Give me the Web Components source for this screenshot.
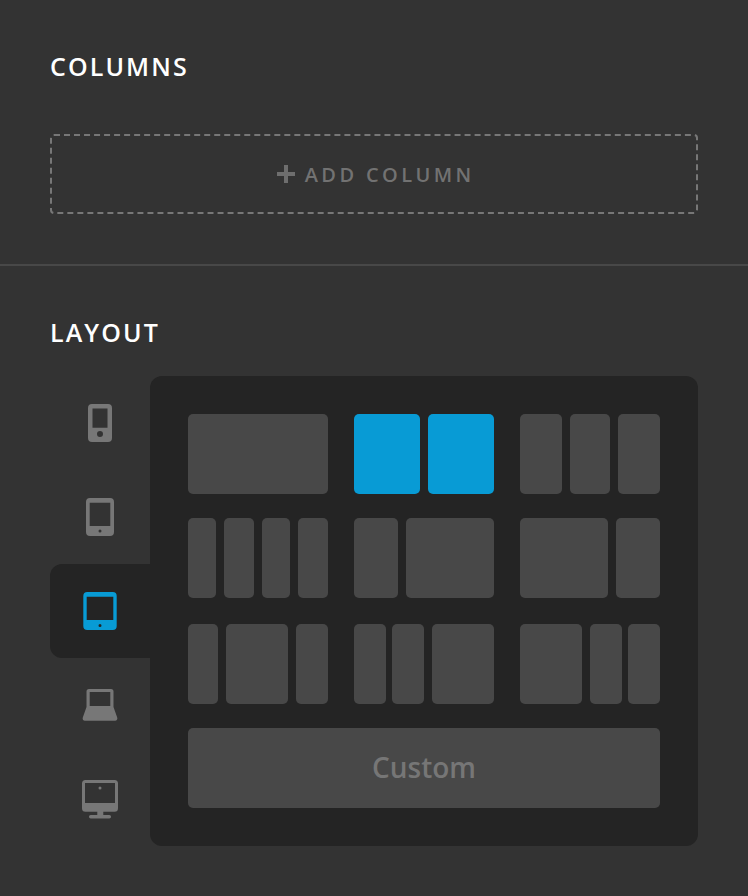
<!DOCTYPE html>
<html>
<head>
<meta charset="utf-8">
<title>Columns</title>
<style>
  html, body { margin: 0; background: #333; }
  body { font-family: "Open Sans", "Liberation Sans", sans-serif; width: 748px; height: 896px; overflow: hidden; }
</style>
</head>
<body>
<panel-section title="COLUMNS" style="height:264px">
  <add-column></add-column>
</panel-section>
<panel-section title="LAYOUT" divided>
  <layout-picker>
    <device-tab slot="tabs" device="phone"></device-tab>
    <device-tab slot="tabs" device="tablet"></device-tab>
    <device-tab slot="tabs" device="tablet-wide" active></device-tab>
    <device-tab slot="tabs" device="laptop"></device-tab>
    <device-tab slot="tabs" device="desktop"></device-tab>

    <layout-row>
      <layout-option cols="140"></layout-option>
      <layout-option cols="66 66" active></layout-option>
      <layout-option cols="42 40 42"></layout-option>
    </layout-row>
    <layout-row>
      <layout-option cols="28 30 28 30"></layout-option>
      <layout-option cols="44 88"></layout-option>
      <layout-option cols="88 44"></layout-option>
    </layout-row>
    <layout-row style="margin-top:2px">
      <layout-option cols="30 62 32"></layout-option>
      <layout-option cols="32 32 62" gaps="6 8"></layout-option>
      <layout-option cols="62 32 32" gaps="8 6"></layout-option>
    </layout-row>
    <custom-option>Custom</custom-option>
  </layout-picker>
</panel-section>

<script>
class PanelSection extends HTMLElement {
  connectedCallback() {
    this.attachShadow({ mode: "open" });
    this.shadowRoot.innerHTML = `
      <style>
        :host {
          display: block;
          box-sizing: border-box;
          padding: 0 50px;
        }
        :host([divided]) {
          border-top: 2px solid #484848;
        }
        h2 {
          margin: 0;
          color: #fff;
          font-size: 25px;
          line-height: 32px;
          font-weight: 600;
          letter-spacing: 2.1px;
          padding: 50px 0 52px;
        }
        :host([divided]) h2 {
          padding: 50px 0 28px;
        }
      </style>
      <h2>${this.getAttribute("title")}</h2>
      <slot></slot>
    `;
  }
}

class AddColumn extends HTMLElement {
  connectedCallback() {
    this.attachShadow({ mode: "open" });
    this.shadowRoot.innerHTML = `
      <style>
        :host {
          display: flex;
          align-items: center;
          justify-content: center;
          gap: 10px;
          height: 80px;
          box-sizing: border-box;
          border: 2px dashed #777;
          border-radius: 4px;
          color: #727272;
          font-size: 20px;
          font-weight: 600;
          letter-spacing: 3.4px;
        }
        svg { display: block; }
        span { margin-right: -3.4px; }
      </style>
      <svg width="18" height="18" viewBox="0 0 18 18"><path d="M7 0h4v7h7v4h-7v7H7v-7H0V7h7z" fill="#6e6e6e"/></svg>
      <span>ADD COLUMN</span>
    `;
  }
}

class LayoutPicker extends HTMLElement {
  connectedCallback() {
    this.attachShadow({ mode: "open" });
    this.shadowRoot.innerHTML = `
      <style>
        :host { display: flex; }
        .tabs { display: flex; flex-direction: column; width: 100px; flex: none; }
        .grid {
          flex: 1;
          display: flex;
          flex-direction: column;
          gap: 24px;
          height: 470px;
          box-sizing: border-box;
          padding: 38px;
          background: #242424;
          border-radius: 12px;
        }
      </style>
      <div class="tabs"><slot name="tabs"></slot></div>
      <div class="grid"><slot></slot></div>
    `;
  }
}

const DEVICE_ICONS = {
  phone: `<path fill-rule="evenodd" d="M92 404h16a4 4 0 0 1 4 4v30a4 4 0 0 1-4 4H92a4 4 0 0 1-4-4v-30a4 4 0 0 1 4-4zm.5 4.500v19.200h15v-19.200zM100 431a3 3 0 1 0 0 6 3 3 0 0 0 0-6z"/>`,
  tablet: `<path fill-rule="evenodd" d="M90 498h20a4 4 0 0 1 4 4v30a4 4 0 0 1-4 4H90a4 4 0 0 1-4-4v-30a4 4 0 0 1 4-4zm-.3 4.700v23.300h20.600v-23.300zM100 529.500a1.500 1.500 0 1 0 0 3 1.500 1.500 0 0 0 0-3z"/>`,
  "tablet-wide": `<path fill-rule="evenodd" d="M87.300 592h25.400a4 4 0 0 1 4 4v30a4 4 0 0 1-4 4H87.300a4 4 0 0 1-4-4v-30a4 4 0 0 1 4-4zm-.6 4.700V620h26.600v-23.300zM100 624a1.500 1.500 0 1 0 0 3 1.500 1.500 0 0 0 0-3z"/>`,
  laptop: `<path fill-rule="evenodd" d="M89 689h22a2.500 2.500 0 0 1 2.500 2.500V707l3.700 10.500c.6 1.700-.4 3.300-2.200 3.300H85c-1.800 0-2.800-1.600-2.200-3.300L86.500 707v-15.500A2.500 2.500 0 0 1 89 689zm.7 3v14h20.600v-14z"/>`,
  desktop: `<path fill-rule="evenodd" d="M85.500 780h29a3.500 3.500 0 0 1 3.500 3.500v24.700a3.500 3.500 0 0 1-3.500 3.500H103.300v3.300h6a1.750 1.750 0 0 1 0 3.500H90.700a1.750 1.750 0 0 1 0-3.500h6.600v-3.300H85.500a3.500 3.500 0 0 1-3.500-3.500v-24.700a3.500 3.500 0 0 1 3.500-3.500zm-.5 3v20h30v-20zM100 786.500a1.500 1.500 0 1 0 0 3 1.500 1.500 0 0 0 0-3z"/>`
};

// y offset of each tab, the paths above are drawn in page coordinates
const DEVICE_TOPS = { phone: 376, tablet: 470, "tablet-wide": 564, laptop: 658, desktop: 752 };

class DeviceTab extends HTMLElement {
  connectedCallback() {
    const device = this.getAttribute("device");
    this.attachShadow({ mode: "open" });
    this.shadowRoot.innerHTML = `
      <style>
        :host {
          display: block;
          height: 94px;
          fill: #777;
        }
        :host([active]) {
          background: #242424;
          border-radius: 12px 0 0 12px;
          fill: #089bd5;
        }
        svg { display: block; }
      </style>
      <svg width="100" height="94" viewBox="50 ${DEVICE_TOPS[device]} 100 94">${DEVICE_ICONS[device]}</svg>
    `;
  }
}

class LayoutRow extends HTMLElement {
  connectedCallback() {
    this.attachShadow({ mode: "open" });
    this.shadowRoot.innerHTML = `
      <style>
        :host { display: flex; gap: 26px; height: 80px; }
      </style>
      <slot></slot>
    `;
  }
}

class LayoutOption extends HTMLElement {
  connectedCallback() {
    const cols = this.getAttribute("cols").split(" ");
    const gaps = (this.getAttribute("gaps") || "8 8 8").split(" ");
    this.attachShadow({ mode: "open" });
    this.shadowRoot.innerHTML = `
      <style>
        :host {
          display: flex;
          width: 140px;
          height: 80px;
          --cell: #484848;
        }
        :host([active]) { --cell: #089bd5; }
        div { background: var(--cell); border-radius: 5px; }
      </style>
      ${cols.map((w, i) => `<div style="width:${w}px;margin-left:${i ? gaps[i - 1] : 0}px"></div>`).join("")}
    `;
  }
}

class CustomOption extends HTMLElement {
  connectedCallback() {
    this.attachShadow({ mode: "open" });
    this.shadowRoot.innerHTML = `
      <style>
        :host {
          display: flex;
          align-items: center;
          justify-content: center;
          height: 80px;
          background: #484848;
          border-radius: 5px;
          color: #767676;
          font-size: 28px;
          font-weight: 600;
          box-sizing: border-box;
          padding-bottom: 2px;
        }
      </style>
      <slot></slot>
    `;
  }
}

customElements.define("panel-section", PanelSection);
customElements.define("add-column", AddColumn);
customElements.define("layout-picker", LayoutPicker);
customElements.define("device-tab", DeviceTab);
customElements.define("layout-row", LayoutRow);
customElements.define("layout-option", LayoutOption);
customElements.define("custom-option", CustomOption);
</script>
</body>
</html>
